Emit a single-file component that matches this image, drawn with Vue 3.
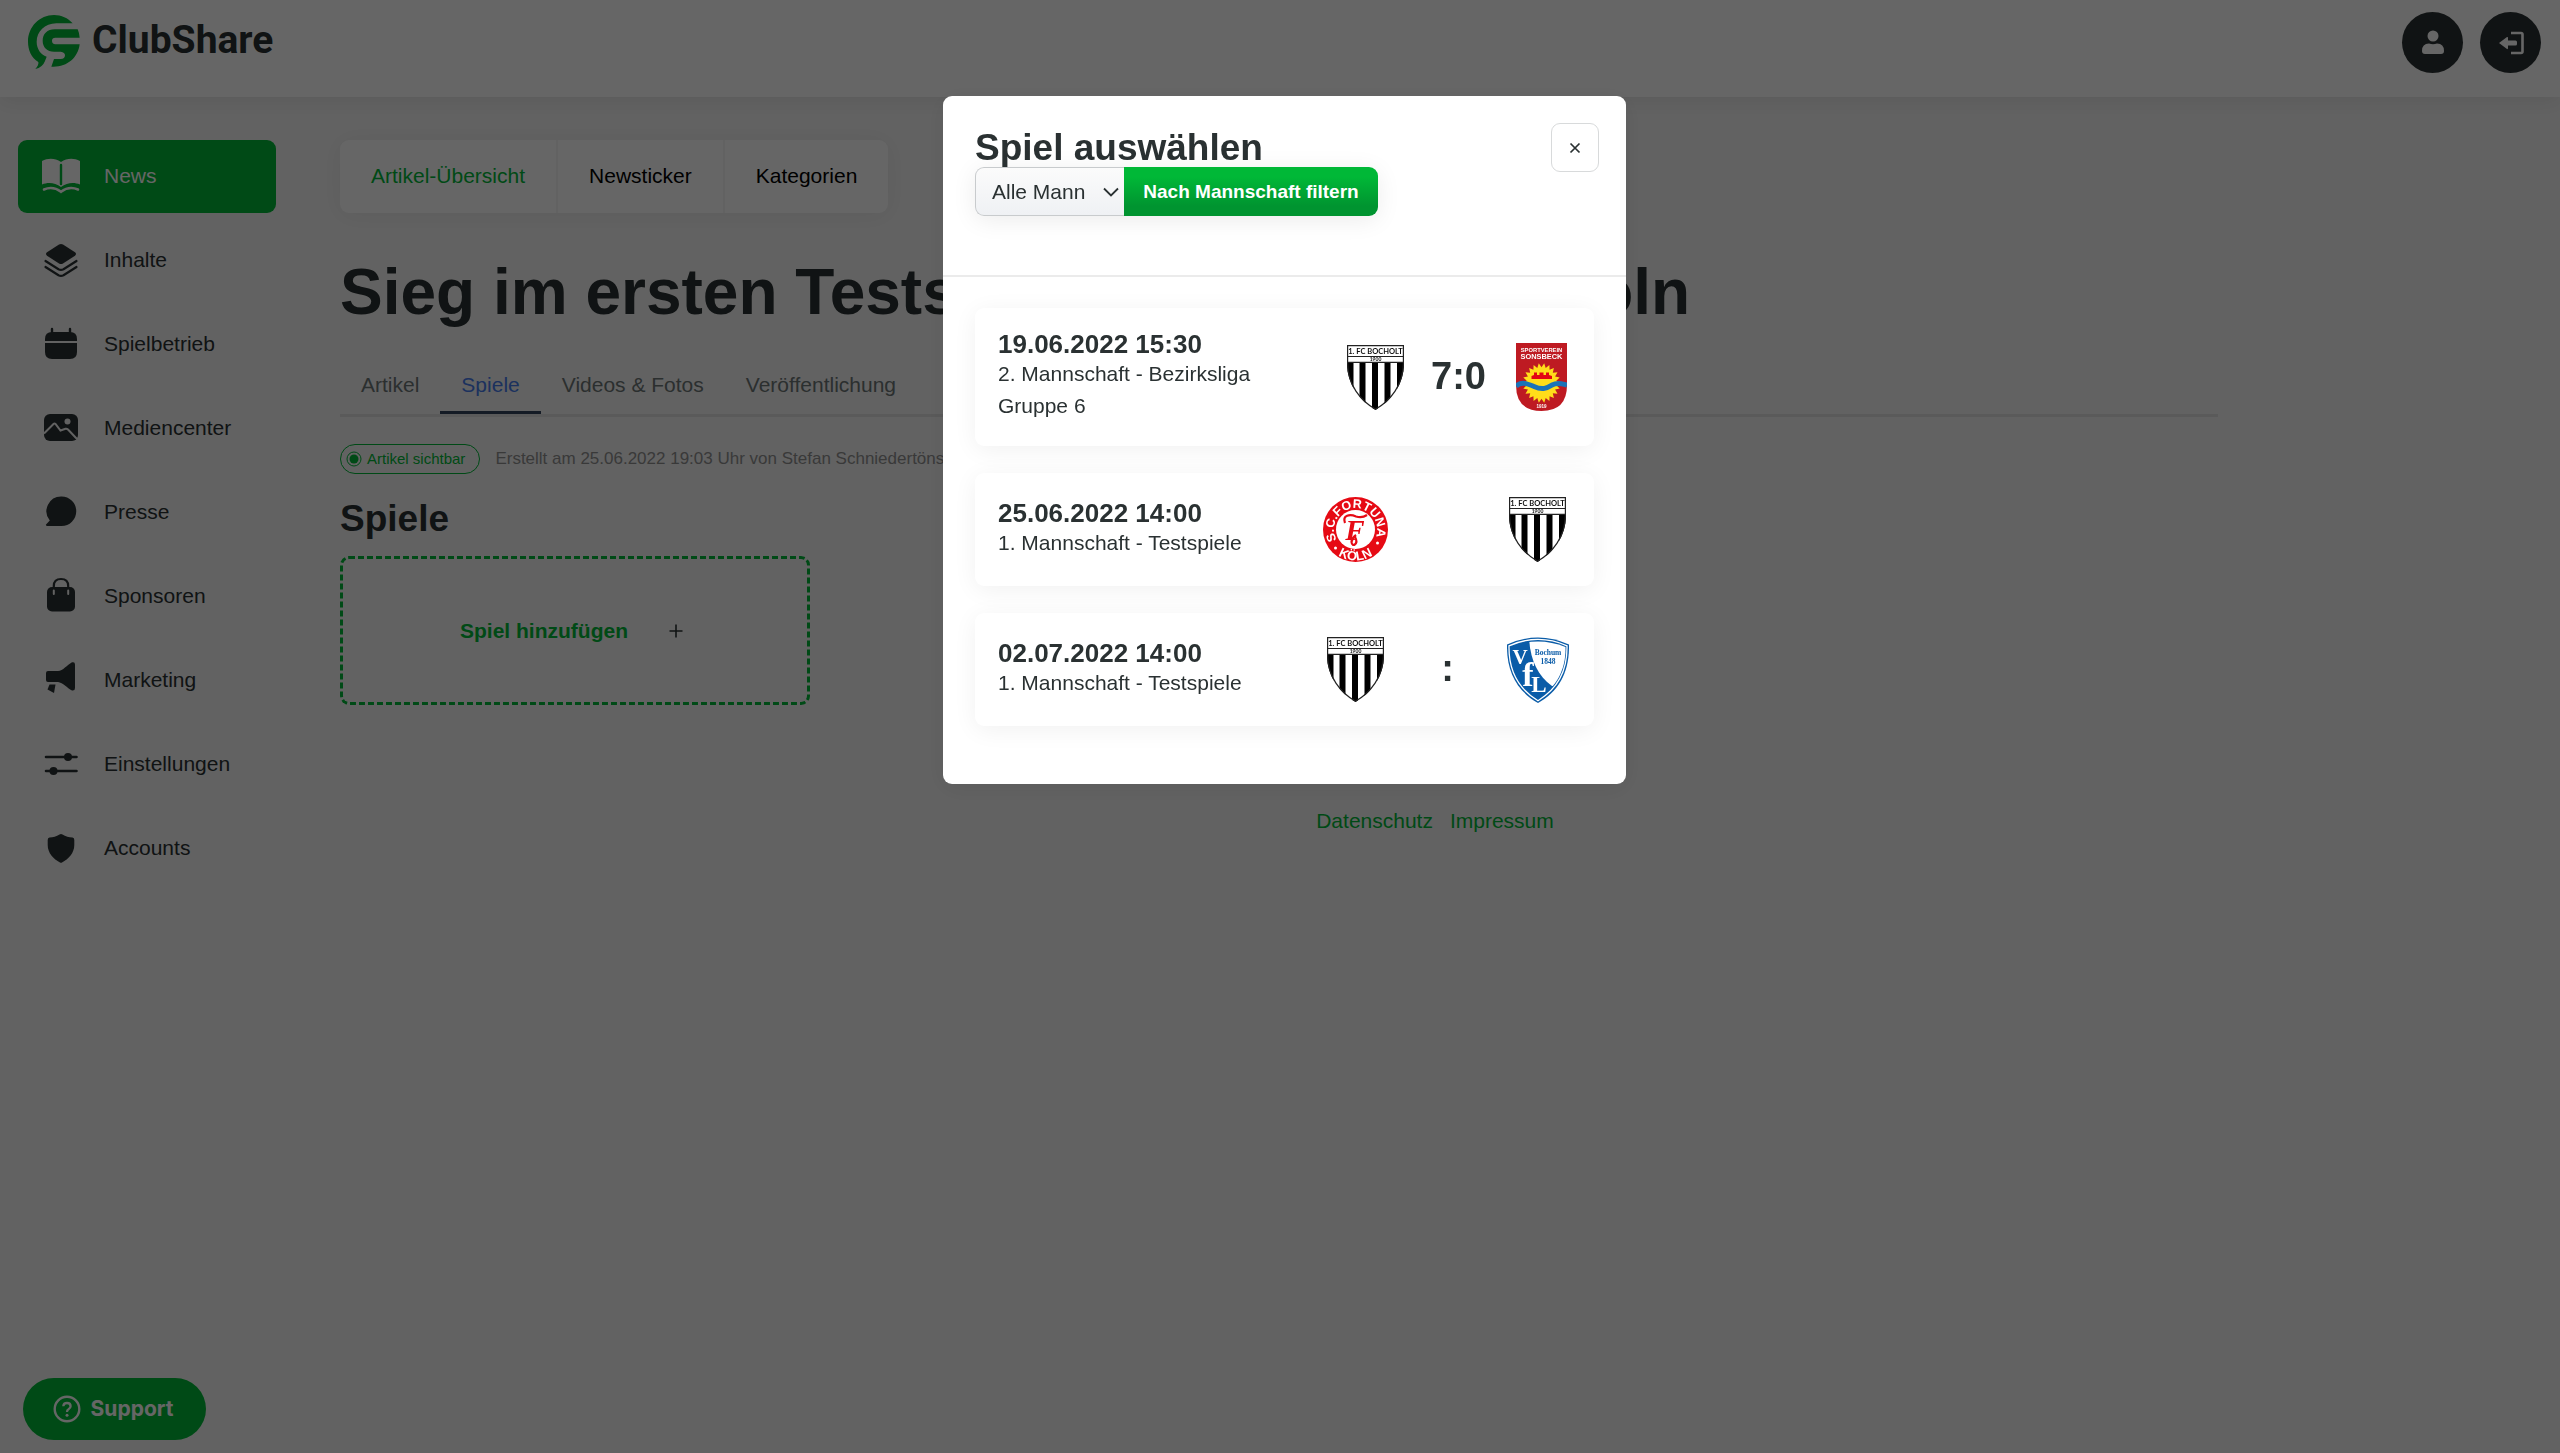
<script setup>
import { ref } from 'vue'

const navItems = [
  { label: 'News', icon: 'book', active: true },
  { label: 'Inhalte', icon: 'layers' },
  { label: 'Spielbetrieb', icon: 'calendar' },
  { label: 'Mediencenter', icon: 'image' },
  { label: 'Presse', icon: 'bubble' },
  { label: 'Sponsoren', icon: 'bag' },
  { label: 'Marketing', icon: 'megaphone' },
  { label: 'Einstellungen', icon: 'sliders' },
  { label: 'Accounts', icon: 'shield' },
]

const sections = ['Artikel-Übersicht', 'Newsticker', 'Kategorien']
const tabs = ['Artikel', 'Spiele', 'Videos & Fotos', 'Veröffentlichung']

const matches = [
  { date: '19.06.2022 15:30', info: '2. Mannschaft - Bezirksliga Gruppe 6', home: 'bocholt', score: '7:0', away: 'sonsbeck', compact: true },
  { date: '25.06.2022 14:00', info: '1. Mannschaft - Testspiele', home: 'fortuna', score: '', away: 'bocholt' },
  { date: '02.07.2022 14:00', info: '1. Mannschaft - Testspiele', home: 'bocholt', score: ':', away: 'bochum' },
]

const team = ref('all')

// Rays of the sun in the Sonsbeck crest
const sunPoints = Array.from({ length: 44 }, (_, i) => {
  const r = i % 2 ? 15 : 19
  const a = (i * Math.PI) / 22
  return `${(25.5 + r * Math.cos(a)).toFixed(1)},${(40 + r * 1.05 * Math.sin(a)).toFixed(1)}`
}).join(' ')
</script>

<template>
  <div class="page">
    <svg class="sprite" aria-hidden="true">
      <symbol id="book" viewBox="0 0 40 40">
        <path fill="currentColor" d="M1 5C7 2 14 2 20 6C26 2 33 2 39 5V28.500C33 26 26 26.500 20 31C14 26.500 7 26 1 28.500Z" />
        <path d="M20 9V28" stroke="#00b837" stroke-width="2.400" stroke-linecap="round" />
        <path d="M3 33.500C9 31 15 32 20 35.800C25 32 31 31 37 33.500" fill="none" stroke="currentColor" stroke-width="2.600" stroke-linecap="round" />
      </symbol>
      <symbol id="layers" viewBox="0 0 40 40">
        <path d="M18 4.500Q20 3.300 22 4.500L34 12.300Q36 14 34 15.700L22 23.500Q20 24.700 18 23.500L6 15.700Q4 14 6 12.300Z" fill="currentColor" />
        <path d="M4.500 21L17.500 29.300Q20 30.600 22.500 29.300L35.500 21M4.500 27L17.500 35.300Q20 36.600 22.500 35.300L35.500 27" fill="none" stroke="currentColor" stroke-width="2.200" stroke-linecap="round" />
      </symbol>
      <symbol id="calendar" viewBox="0 0 40 40">
        <path d="M4 17V15Q4 8 11 8H29Q36 8 36 15V17ZM4 19H36V28Q36 35 29 35H11Q4 35 4 28Z" fill="currentColor" />
        <path d="M11 5V10M29 5V10" stroke="currentColor" stroke-width="2.400" stroke-linecap="round" />
      </symbol>
      <symbol id="image" viewBox="0 0 40 40">
        <rect x="3" y="6" width="34" height="27" rx="6" fill="currentColor" />
        <circle cx="26.500" cy="13.500" r="3" fill="#f5f5f5" />
        <path d="M3 25.500L12.500 16Q13.500 15 14.500 16L19.500 22.500L24.500 20.800Q26 20.500 27 21.500L36 31" fill="none" stroke="#f5f5f5" stroke-width="2" />
      </symbol>
      <symbol id="bubble" viewBox="0 0 40 40">
        <path d="M20.500 4.500A14.700 14.700 0 0 1 20.500 34H6Q4 33.500 5.500 32L8.800 28.500A14.700 14.700 0 0 1 20.500 4.500Z" fill="currentColor" />
      </symbol>
      <symbol id="bag" viewBox="0 0 40 40">
        <rect x="6" y="11" width="28" height="24.500" rx="5" fill="currentColor" />
        <path d="M12.800 12V10Q12.800 3 20 3Q27.200 3 27.200 10V12" fill="none" stroke="currentColor" stroke-width="2.200" />
        <path d="M12.800 14.500V18M27.200 14.500V18" stroke="#f5f5f5" stroke-width="2" stroke-linecap="round" />
      </symbol>
      <symbol id="megaphone" viewBox="0 0 40 40">
        <path d="M5 13Q5 11 7 11H17C22 11 26 5 31 2.300Q34 1.500 34 4.500V28Q34 31 31 30.500C26 28 22 22.500 17 22H7Q5 22 5 20Z" fill="currentColor" />
        <path d="M8.500 24.500H14.500L13 33L6.500 29.500Z" fill="currentColor" />
      </symbol>
      <symbol id="sliders" viewBox="0 0 40 40">
        <path d="M5 13H35.500M5 27H35.500" stroke="currentColor" stroke-width="2.600" stroke-linecap="round" />
        <circle cx="27" cy="13" r="4" fill="currentColor" />
        <circle cx="12.500" cy="27" r="4" fill="currentColor" />
      </symbol>
      <symbol id="shield" viewBox="0 0 40 40">
        <path d="M18.500 6.500Q20 5.500 21.500 6.500C24.500 8.500 28 9.500 31.500 9.500Q33.300 9.800 33.300 12V17C33.300 25 27.500 31 21 34.500Q20 35 19 34.500C12.500 31 6.700 25 6.700 17V12Q6.700 9.800 8.500 9.500C12 9.500 15.500 8.500 18.500 6.500Z" fill="currentColor" />
      </symbol>
      <clipPath id="bocholt-clip"><path d="M0 0H57V18C57 40 44 56 28.500 65C13 56 0 40 0 18Z" /></clipPath>
      <clipPath id="sonsbeck-clip"><path d="M0 0H51V42Q51 68 25.500 68Q0 68 0 42Z" /></clipPath>
      <clipPath id="bochum-clip"><path d="M3.500 10Q31 -1 58.500 10C59 32 50 50 31 61.500C12 50 3 32 3.500 10Z" /></clipPath>
    </svg>

    <header class="topbar">
      <a class="brand" href="#">
        <svg class="brand-mark" viewBox="0 0 156 162" aria-hidden="true">
          <path d="M134 25H85C50 25 26 50 26 80C26 102 38 118 56 125L50 140Q44 156 22 162Q33 150 31 141C10 128 0 105 0 80C0 35 35 0 78 0C100 0 120 9 134 25Z" />
          <path d="M149 43H80C58 43 44 57 44 77C44 97 58 110 78 110H98Q111 112 111 121Q111 132 98 132H78L70 155C115 158 150 130 155 88H82Q72 87 72 77Q72 68 82 68H155Q154 54 149 43Z" />
        </svg>
        <span>ClubShare</span>
      </a>
      <div class="account">
        <button class="round" type="button" aria-label="Profil">
          <svg viewBox="0 0 30 30" width="30" height="30" aria-hidden="true">
            <circle cx="15" cy="8" r="5.500" fill="currentColor" />
            <path d="M4 23Q4 15.500 11 15.500Q15 17 19 15.500Q26 15.500 26 23Q26 26 23 26H7Q4 26 4 23Z" fill="currentColor" />
          </svg>
        </button>
        <button class="round" type="button" aria-label="Abmelden">
          <svg viewBox="0 0 30 30" width="30" height="30" aria-hidden="true">
            <path d="M15 5H25Q26.500 5 26.500 6.500V23.500Q26.500 25 25 25H15" fill="none" stroke="currentColor" stroke-width="2.600" />
            <path d="M3 15L11 9Q12 8.500 12 10V12.500H19.500Q21 12.500 21 14V16Q21 17.500 19.500 17.500H12V20Q12 21.500 11 21Z" fill="currentColor" />
          </svg>
        </button>
      </div>
    </header>

    <div class="layout">
      <nav class="sidebar" aria-label="Hauptmenü">
        <a v-for="item in navItems" :key="item.label" href="#" class="nav-item" :class="{ active: item.active }">
          <svg width="40" height="40" aria-hidden="true"><use :href="'#' + item.icon" /></svg>
          <span>{{ item.label }}</span>
        </a>
      </nav>

      <main class="main">
        <div class="content">
          <nav class="sections">
            <a v-for="(s, i) in sections" :key="s" href="#" :class="{ current: i === 0 }">{{ s }}</a>
          </nav>
          <h1>Sieg im ersten Testspiel gegen Fortuna Köln</h1>
          <nav class="tabs">
            <a v-for="t in tabs" :key="t" href="#" :class="{ current: t === 'Spiele' }">{{ t }}</a>
          </nav>
          <div class="meta">
            <span class="status">
              <svg width="16" height="16" viewBox="0 0 16 16" aria-hidden="true">
                <circle cx="8" cy="8" r="7" fill="none" stroke="currentColor" />
                <circle cx="8" cy="8" r="4.500" fill="currentColor" />
              </svg>
              Artikel sichtbar
            </span>
            <span>Erstellt am 25.06.2022 19:03 Uhr von Stefan Schniedertöns</span>
          </div>
          <h2>Spiele</h2>
          <button class="add-match" type="button">
            <span>Spiel hinzufügen</span>
            <svg width="28" height="28" viewBox="0 0 28 28" aria-hidden="true">
              <path d="M14 7.500V20.500M7.500 14H20.500" stroke="currentColor" stroke-width="1.600" />
            </svg>
          </button>
        </div>
        <footer class="footer">
          <a href="#">Datenschutz</a>
          <a href="#">Impressum</a>
        </footer>
      </main>
    </div>

    <button class="support" type="button">
      <svg width="28" height="28" viewBox="0 0 28 28" aria-hidden="true">
        <circle cx="14" cy="14" r="12.300" fill="none" stroke="currentColor" stroke-width="2.400" />
        <path d="M10.300 11.300Q10.500 8 14 8Q17.600 8 17.600 11.200Q17.600 13 15.500 14.200Q14 15 14 17" fill="none" stroke="currentColor" stroke-width="2.300" />
        <circle cx="14" cy="20.300" r="1.500" fill="currentColor" />
      </svg>
      Support
    </button>

    <div class="overlay">
      <section class="modal" role="dialog" aria-modal="true" aria-labelledby="modal-title">
        <header class="modal-head">
          <div class="modal-lead">
            <h2 id="modal-title">Spiel auswählen</h2>
            <form class="filter" @submit.prevent>
              <span class="select-wrap">
                <select v-model="team" aria-label="Mannschaft">
                  <option value="all">Alle Mann</option>
                </select>
                <svg width="16" height="10" viewBox="0 0 16 10" aria-hidden="true">
                  <path d="M1 1.500L8 8.500L15 1.500" fill="none" stroke="currentColor" stroke-width="1.800" />
                </svg>
              </span>
              <button type="submit">Nach Mannschaft filtern</button>
            </form>
          </div>
          <button class="close" type="button" aria-label="Schließen">
            <svg width="12" height="12" viewBox="0 0 12 12" aria-hidden="true">
              <path d="M1.500 1.500L10.500 10.500M10.500 1.500L1.500 10.500" stroke="currentColor" stroke-width="1.700" />
            </svg>
          </button>
        </header>
        <div class="match-list">
          <article v-for="m in matches" :key="m.date" class="match">
            <div class="match-info">
              <strong>{{ m.date }}</strong>
              <p>{{ m.info }}</p>
            </div>
            <div class="pairing" :class="{ compact: m.compact }">
              <template v-for="side in ['home', 'away']" :key="side">
                <svg v-if="m[side] === 'bocholt'" class="crest" role="img" aria-label="1. FC Bocholt" width="57" height="65" viewBox="0 0 57 65">
                  <g clip-path="url(#bocholt-clip)">
                    <rect width="57" height="65" fill="#fff" />
                    <path d="M0 17H6.500V65H0ZM12.500 17H18.500V65H12.500ZM25 17H31V65H25ZM37.500 17H43.500V65H37.500ZM50 17H57V65H50Z" fill="#000" />
                  </g>
                  <path d="M.6 .6H56.400V18C56.400 40 43.500 55.500 28.500 64.300C13.500 55.500 .6 40 .6 18ZM0 11.500H57M0 17.300H57" fill="none" stroke="#222" stroke-width="1.200" />
                  <text x="28.500" y="8.800" class="lato" font-size="7.500" fill="#111">1. FC BOCHOLT</text>
                  <text x="28.500" y="16.300" class="lato" font-size="5" fill="#111">1900</text>
                </svg>
                <svg v-else-if="m[side] === 'sonsbeck'" class="crest" role="img" aria-label="SV Sonsbeck" width="51" height="68" viewBox="0 0 51 68">
                  <g clip-path="url(#sonsbeck-clip)">
                    <rect width="51" height="68" fill="#be1a22" />
                    <polygon :points="sunPoints" fill="#ffdd1a" />
                    <path d="M15.500 36V33L18 32V29.500H21V32H23.500V29.500H27.500V32H30V29.500H33V32L36 33V36Z" fill="#e30613" />
                    <path d="M0 43C6 38 12 41 18 43.500C27 47.500 31 45 36 42C42 39 46 41 51 42" fill="none" stroke="#1a73b8" stroke-width="5" />
                  </g>
                  <text x="25.500" y="8.500" class="sans" font-size="5.800" fill="#fff">SPORTVEREIN</text>
                  <text x="25.500" y="16.300" class="sans" font-size="7.400" fill="#fff">SONSBECK</text>
                  <text x="25.500" y="65" class="sans" font-size="4.500" fill="#fff">1919</text>
                </svg>
                <svg v-else-if="m[side] === 'fortuna'" class="crest" role="img" aria-label="S.C. Fortuna Köln" width="65" height="65" viewBox="0 0 65 65">
                  <circle cx="32.500" cy="32.500" r="32.500" fill="#e60a14" />
                  <circle cx="32.500" cy="32.500" r="19.500" fill="#fff" />
                  <path id="fortuna-top" d="M25 52.700A21.500 21.500 0 1 1 40 52.700" fill="none" />
                  <path id="fortuna-bottom" d="M1.500 32.500A31 31 0 0 0 63.500 32.500" fill="none" />
                  <g class="sans" fill="#fff">
                    <text font-size="12.500" transform="rotate(-5 32.500 32.500)"><textPath href="#fortuna-top" startOffset="50%">S.C.FORTUNA</textPath></text>
                    <text font-size="13"><textPath href="#fortuna-bottom" startOffset="50%">KÖLN</textPath></text>
                  </g>
                  <circle cx="12.500" cy="51" r="1.500" fill="#fff" />
                  <circle cx="54.500" cy="46" r="1.500" fill="#fff" />
                  <path d="M22 26C19 18 27 17 33 19.500Q39 21.500 44 18M32 40C36 47 29 51 28.500 45Q29 41 33 38" fill="none" stroke="#e60a14" stroke-width="2.200" />
                  <text x="32" y="43" class="serif" font-style="italic" font-size="29" fill="#e60a14">F</text>
                </svg>
                <svg v-else class="crest" role="img" aria-label="VfL Bochum" width="62" height="66" viewBox="0 0 62 66">
                  <path d="M0 7.500Q31 -6.500 62 7.500C62.500 35 52 54 31 66C10 54 -.5 35 0 7.500Z" fill="#0a5ca8" />
                  <path d="M2 8.800Q31 -4 60 8.800C60.500 33.500 50.500 52 31 63.700C11.500 52 1.500 33.500 2 8.800Z" fill="none" stroke="#fff" stroke-width="1.300" />
                  <path clip-path="url(#bochum-clip)" d="M22 0C23 22 30 38 45 49L62 50V0Z" fill="#fff" />
                  <g class="serif" fill="#fff">
                    <text x="13" y="27" font-size="21">V</text>
                    <text x="21" y="49" font-size="34" font-weight="400">f</text>
                    <text x="32" y="55" font-size="23">L</text>
                  </g>
                  <g class="serif" fill="#0a5ca8" font-size="7.500">
                    <text x="41" y="18">Bochum</text>
                    <text x="41" y="27">1848</text>
                  </g>
                </svg>
                <span v-if="side === 'home'" class="score">{{ m.score }}</span>
              </template>
            </div>
          </article>
        </div>
      </section>
    </div>
  </div>
</template>

<style>
body {
  margin: 0;
  background: #f5f5f5;
}
</style>

<style scoped>
.page {
  min-height: 100vh;
  background: #f5f5f5;
  color: #2a3132;
  font-family: "Liberation Sans", Arial, sans-serif;
  font-size: 21px;
  line-height: 32px;
}
.page *,
.page {
  box-sizing: border-box;
}
.sprite {
  position: absolute;
  width: 0;
  height: 0;
}
a {
  color: inherit;
  text-decoration: none;
}
button,
select {
  font: inherit;
  color: inherit;
  margin: 0;
  border: 0;
  background: none;
}
h1,
h2,
p {
  margin: 0;
}

.topbar {
  display: flex;
  justify-content: space-between;
  align-items: flex-start;
  height: 97px;
  padding: 12px 19px 0 28px;
  background: #fff;
  box-shadow: 0 4px 20px rgba(0, 0, 0, 0.08);
}
.brand {
  display: flex;
  gap: 12px;
  padding-top: 3px;
  font: 700 39px/50px Roboto, sans-serif;
}
.brand-mark {
  width: 52px;
  height: 54px;
  fill: #00b837;
}
.account {
  display: flex;
  gap: 17px;
}
.round {
  display: grid;
  place-items: center;
  width: 61px;
  height: 61px;
  padding: 0;
  border-radius: 50%;
  background: #2a3132;
  color: #fff;
}

.layout {
  display: flex;
  padding: 43px 30px 0 18px;
}
.sidebar {
  display: flex;
  flex-direction: column;
  flex: none;
  gap: 11px;
  width: 258px;
  margin-right: 64px;
}
.nav-item {
  display: flex;
  align-items: center;
  gap: 23px;
  height: 73px;
  padding: 0 23px 2px;
  border-radius: 9px;
}
.nav-item.active {
  background: #00b837;
  color: #fff;
}
.main {
  flex: 1;
  min-width: 0;
}
.content {
  max-width: 1878px;
}
.sections {
  display: flex;
  width: fit-content;
  background: #fff;
  border-radius: 9px;
  box-shadow: 0 2px 24px rgba(0, 0, 0, 0.06);
  color: #000;
}
.sections a {
  padding: 20px 31px 21px;
}
.sections a + a {
  border-left: 2px solid #f5f5f5;
}
.sections .current {
  color: #00b837;
}
h1 {
  margin-top: 43px;
  font-size: 64px;
  line-height: 72px;
}
.tabs {
  display: flex;
  margin-top: 33px;
  border-bottom: 3px solid #e0e0e0;
  color: #6d7576;
}
.tabs a {
  padding: 8px 21px 10px;
  border-bottom: 3px solid transparent;
}
.tabs .current {
  color: #467bea;
  border-color: #34445c;
}
.meta {
  display: flex;
  align-items: center;
  gap: 15px;
  margin-top: 27px;
  font-size: 17px;
  line-height: 30px;
  color: #909090;
}
.status {
  display: flex;
  align-items: center;
  gap: 5px;
  height: 30px;
  padding: 0 14px 0 5px;
  border: 1px solid #00b837;
  border-radius: 15px;
  font-size: 15px;
  color: #00b837;
}
.content h2 {
  margin-top: 26px;
  font-size: 37px;
  line-height: 38px;
}
.add-match {
  display: flex;
  align-items: center;
  justify-content: center;
  gap: 34px;
  width: 470px;
  height: 149px;
  margin-top: 18px;
  border: 3px dashed #00b837;
  border-radius: 9px;
}
.add-match span {
  color: #00b837;
  font-weight: 700;
}
.footer {
  display: flex;
  justify-content: center;
  gap: 17px;
  margin-top: 100px;
  color: #00b837;
}

.support {
  position: fixed;
  left: 23px;
  bottom: 13px;
  display: flex;
  align-items: center;
  justify-content: center;
  gap: 10px;
  width: 183px;
  height: 62px;
  padding: 0 3px 0 0;
  border-radius: 31px;
  background: #00b837;
  color: #fff;
  font: 700 21px/32px Inter, sans-serif;
}

.overlay {
  position: fixed;
  inset: 0;
  display: flex;
  align-items: flex-start;
  justify-content: center;
  padding: 96px 0 0 9px;
  background: rgba(0, 0, 0, 0.6);
}
.modal {
  width: 683px;
  background: #fff;
  border-radius: 9px;
  box-shadow: 0 4px 24px rgba(0, 0, 0, 0.08);
}
.modal-head {
  display: flex;
  align-items: flex-start;
  justify-content: space-between;
  padding: 27px 27px 59px 32px;
  border-bottom: 2px solid #ebebeb;
}
.modal-lead {
  padding-top: 5px;
}
.modal-lead h2 {
  font-size: 37px;
  line-height: 39px;
}
.filter {
  position: relative;
  display: flex;
  width: fit-content;
  border-radius: 9px;
  box-shadow: 0 4px 24px rgba(0, 0, 0, 0.08);
}
.select-wrap {
  position: relative;
  display: flex;
}
.select-wrap select {
  appearance: none;
  width: 149px;
  height: 49px;
  padding: 0 36px 0 16px;
  border: 1px solid #c8cbcd;
  border-right: 0;
  border-radius: 9px 0 0 9px;
  background: linear-gradient(#fbfbfb, #eff1f4);
}
.select-wrap svg {
  position: absolute;
  right: 5px;
  top: 20px;
  pointer-events: none;
}
.filter button {
  width: 254px;
  height: 49px;
  padding: 0;
  border-radius: 0 9px 9px 0;
  background: linear-gradient(#00b837 20%, #009430 80%);
  color: #fff;
  font-size: 19px;
  font-weight: 700;
}
.close {
  display: grid;
  place-items: center;
  width: 48px;
  height: 49px;
  padding: 0;
  border: 1px solid #d8dadb;
  border-radius: 9px;
}
.match-list {
  display: flex;
  flex-direction: column;
  gap: 27px;
  padding: 31px 32px 58px;
}
.match {
  display: flex;
  align-items: center;
  justify-content: space-between;
  min-height: 113px;
  padding: 22px 23px;
  background: #fff;
  border-radius: 9px;
  box-shadow: 0 4px 24px rgba(0, 0, 0, 0.06);
}
.match-info {
  width: 300px;
  padding-bottom: 2px;
}
.match-info strong {
  display: block;
  font-size: 26px;
  line-height: 28px;
}
.pairing {
  display: grid;
  grid-template-columns: 67px 115px 67px;
  align-items: center;
  justify-items: center;
}
.pairing.compact {
  grid-template-columns: 58px 107px 60px;
}
.crest text,
.crest .sans,
.crest .serif {
  font-weight: 700;
  text-anchor: middle;
}
.crest .lato {
  font-family: Lato, sans-serif;
}
.crest .sans {
  font-family: "Liberation Sans", Arial, sans-serif;
}
.crest .serif {
  font-family: "Liberation Serif", "Times New Roman", serif;
}
.score {
  padding: 0 0 3px 2px;
  font-size: 38px;
  line-height: 38px;
  font-weight: 700;
}
</style>
